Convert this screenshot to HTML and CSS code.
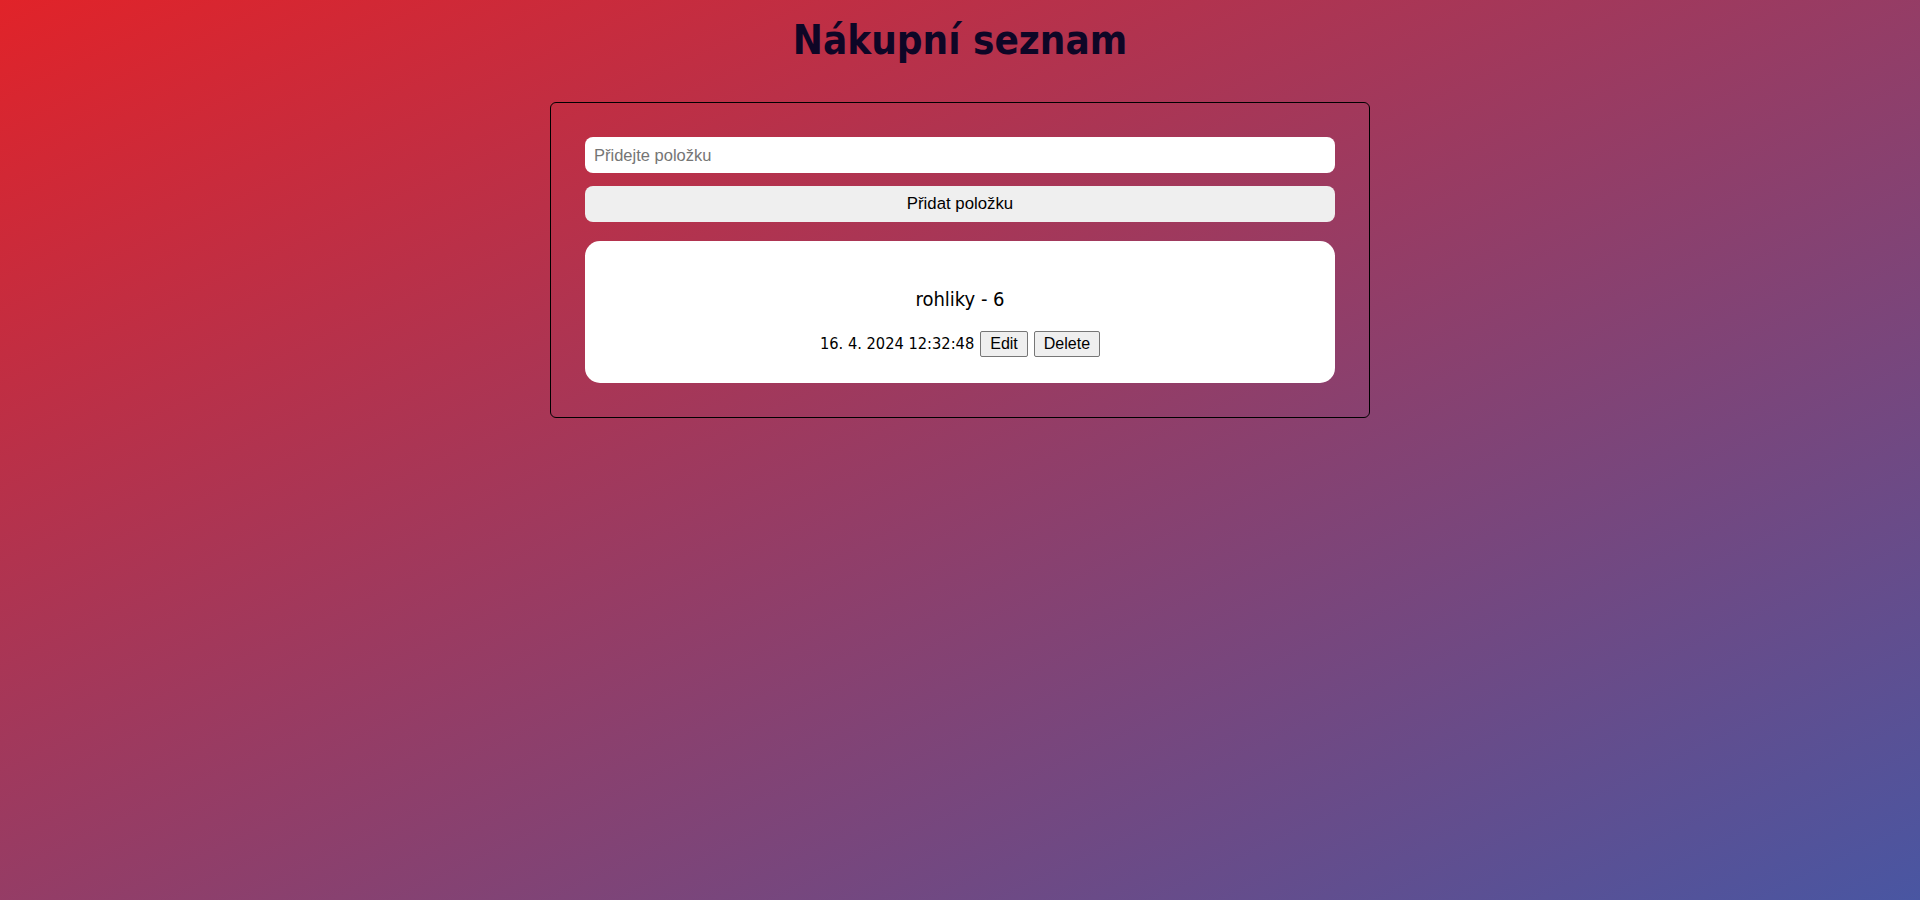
FILE: index.html
```html
<!DOCTYPE html>
<html lang="cs">
<head>
<meta charset="utf-8">
<title>Nákupní seznam</title>
<link rel="stylesheet" href="styles.css">
</head>
<body>
  <h1 class="title">Nákupní seznam</h1>
  <main class="panel">
    <input class="item-input" type="text" placeholder="Přidejte položku">
    <button class="add-btn" type="button">Přidat položku</button>
    <ul class="list">
      <li class="list-item">
        <p class="item-name">rohliky - 6</p>
        <div class="item-meta">
          <span class="item-date">16. 4. 2024 12:32:48</span>
          <button class="small-btn" type="button">Edit</button>
          <button class="small-btn" type="button">Delete</button>
        </div>
      </li>
    </ul>
  </main>
</body>
</html>
```

FILE: styles.css
```css
html, body {
  margin: 0;
  padding: 0;
}

body {
  min-height: 100vh;
  background: linear-gradient(to bottom right, #e12329, #4956a2);
  font-family: "DejaVu Sans Condensed", "DejaVu Sans", sans-serif;
  font-stretch: condensed;
  display: flex;
  flex-direction: column;
  align-items: center;
}

.title {
  margin: 16px 0 38px;
  font-size: 40px;
  line-height: 48px;
  font-weight: bold;
  color: #0e0626;
  text-align: center;
}

.panel {
  box-sizing: border-box;
  width: 820px;
  border: 1px solid #000;
  border-radius: 6px;
  padding: 34px;
  display: flex;
  flex-direction: column;
}

.item-input {
  box-sizing: border-box;
  height: 36px;
  margin: 0 0 13px;
  padding: 0 9px;
  border: none;
  border-radius: 8px;
  background: #fff;
  font-family: "Liberation Sans", Arial, sans-serif;
  font-size: 16.5px;
  color: #000;
  outline: none;
}

.item-input::placeholder {
  color: #757575;
}

.add-btn {
  box-sizing: border-box;
  height: 36px;
  margin: 0 0 19px;
  padding: 0;
  border: none;
  border-radius: 8px;
  background: #efefef;
  font-family: "Liberation Sans", Arial, sans-serif;
  font-size: 16.8px;
  color: #000;
}

.list {
  list-style: none;
  margin: 0;
  padding: 0;
}

.list-item {
  box-sizing: border-box;
  height: 142px;
  background: #fff;
  border-radius: 15px;
  padding: 47px 0 0;
  display: flex;
  flex-direction: column;
  align-items: center;
  color: #000;
}

.item-name {
  margin: 0 0 21px;
  font-size: 20px;
  line-height: 22px;
}

.item-meta {
  display: flex;
  align-items: baseline;
  gap: 6px;
  font-size: 16.3px;
}

.small-btn {
  box-sizing: border-box;
  height: 26px;
  padding: 3px 9px;
  border: 1px solid #767676;
  border-radius: 2px;
  background: #efefef;
  font-family: "Liberation Sans", Arial, sans-serif;
  font-size: 16px;
  line-height: 18px;
  color: #000;
}
```
